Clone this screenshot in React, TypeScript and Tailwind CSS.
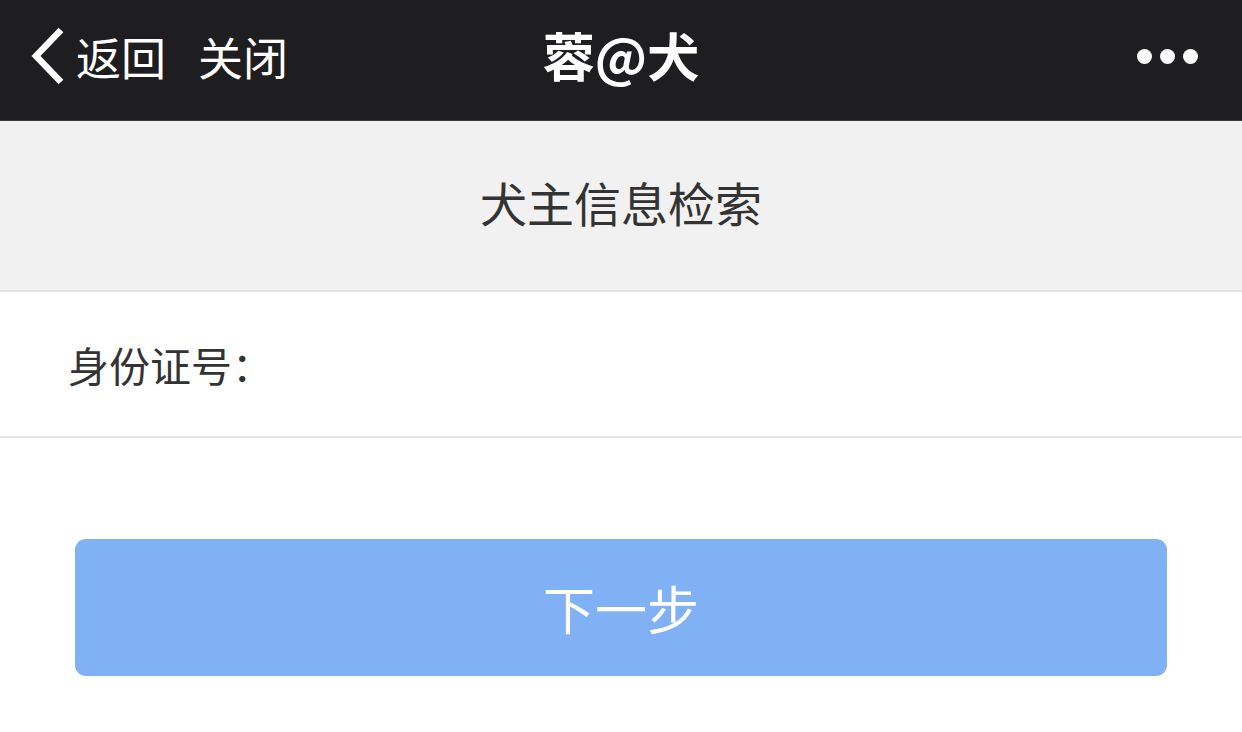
const font = "font-['Noto_Sans_CJK_SC','Noto_Sans',sans-serif]";

export default function App() {
  return (
    <div className={`w-[1242px] h-[732px] bg-white flex flex-col ${font}`}>
      {/* Top bar */}
      <div className="h-[121px] bg-[#1e1d20] flex items-center px-[30px] pb-[8px] border-b border-[#3a3a3c] relative">
        <div className="flex items-center">
          <svg width="36" height="60" viewBox="0 0 36 60" className="mr-[10px]">
            <path d="M31 4 L6 30 L31 56" fill="none" stroke="white" strokeWidth="6.5" strokeLinecap="butt" strokeLinejoin="miter" />
          </svg>
          <span className="text-white text-[45px] leading-none">返回</span>
          <span className="text-white text-[45px] leading-none ml-[32px]">关闭</span>
        </div>
        <div className="absolute left-0 right-0 top-0 bottom-0 pb-[10px] flex items-center justify-center pointer-events-none">
          <span className="text-white text-[52px] font-bold leading-none">蓉@犬</span>
        </div>
        <div className="ml-auto flex items-center gap-[8px] mr-[14px]">
          <span className="w-[15px] h-[15px] rounded-full bg-white" />
          <span className="w-[15px] h-[15px] rounded-full bg-white" />
          <span className="w-[15px] h-[15px] rounded-full bg-white" />
        </div>
      </div>

      {/* Title band */}
      <div className="h-[171px] bg-[#f1f1f1] border-b-2 border-[#e2e2e2] flex items-center justify-center pb-[8px]">
        <span className="text-[#333] text-[47px] leading-none">犬主信息检索</span>
      </div>

      {/* Input row */}
      <div className="h-[146px] bg-white border-b-2 border-[#e4e4e4] flex items-center px-[68px]">
        <span className="text-[#333] text-[41px] leading-none">身份证号：</span>
        <input className="flex-1 outline-none bg-transparent text-[41px]" />
      </div>

      {/* Button */}
      <div className="px-[75px] pt-[101px]">
        <button className="w-full h-[137px] rounded-[11px] bg-[#80b1f5] flex items-center justify-center">
          <span className="text-white text-[52px] leading-none">下一步</span>
        </button>
      </div>
    </div>
  );
}
